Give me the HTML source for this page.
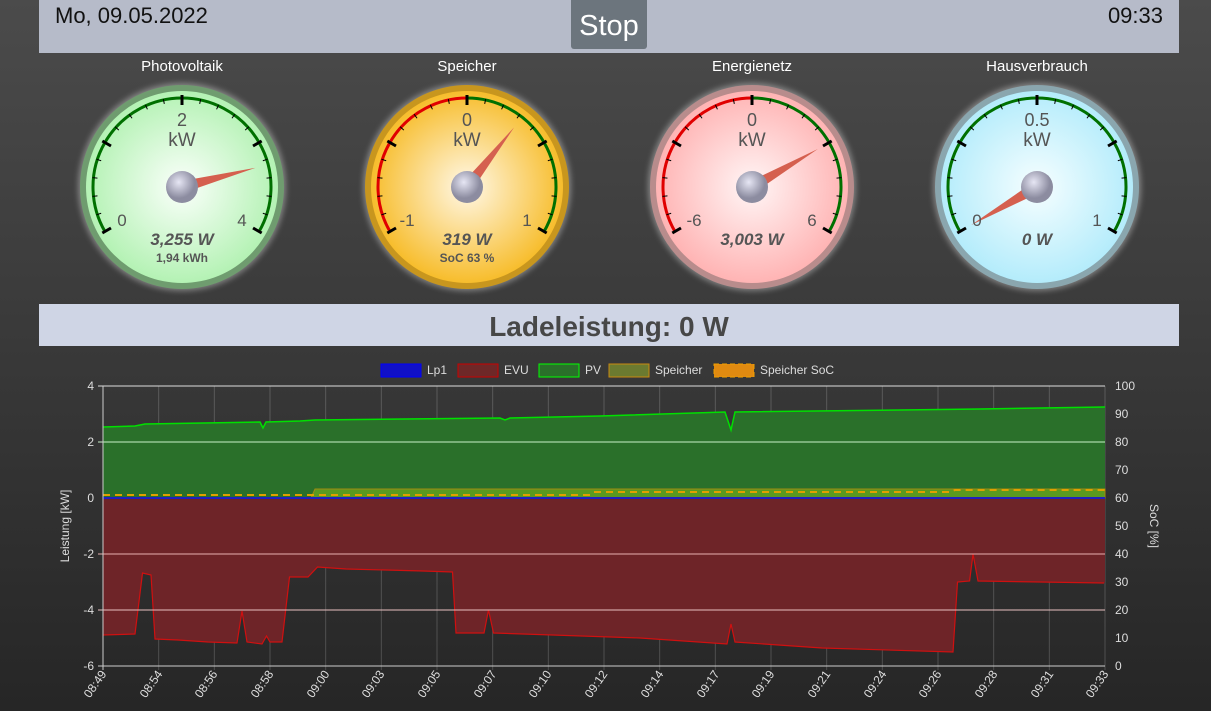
<!DOCTYPE html>
<html><head><meta charset="utf-8">
<style>
html,body{margin:0;padding:0;width:1211px;height:711px;overflow:hidden}
body{background:linear-gradient(#4b4b4b,#262626);font-family:"Liberation Sans",sans-serif;position:relative}
.hdr{position:absolute;left:39px;top:0;width:1140px;height:53px;background:#b6bbc9}
.hdr .d{position:absolute;left:16px;top:3px;font-size:22px;color:#111}
.hdr .t{position:absolute;right:16px;top:3px;font-size:22px;color:#111}
.stop{position:absolute;left:571px;top:0;width:76px;height:49px;background:#6c757d;border-radius:0 0 3px 3px;color:#fff;font-size:29px;text-align:center;line-height:52px}
.gt{position:absolute;top:58px;width:200px;text-align:center;color:#fff;font-size:15px}
svg.g{position:absolute;top:77px;width:220px;height:220px;overflow:visible}
.lade{position:absolute;left:39px;top:304px;width:1140px;height:42px;background:#cfd5e5;color:#474747;font-weight:bold;font-size:28px;text-align:center;line-height:46px}
svg.c{position:absolute;left:0;top:355px}
</style></head><body>
<div class="hdr"><div class="d">Mo, 09.05.2022</div><div class="t">09:33</div></div>
<div class="stop">Stop</div>
<div class="gt" style="left:82px">Photovoltaik</div>
<div class="gt" style="left:367px">Speicher</div>
<div class="gt" style="left:652px">Energienetz</div>
<div class="gt" style="left:937px">Hausverbrauch</div>

<svg class="g" id="g0" style="left:72px" viewBox="0 0 220 220">
<defs>
<radialGradient id="fg0"><stop offset="0" stop-color="#fbfffb"/><stop offset="1" stop-color="#b4f2b4"/></radialGradient>
<radialGradient id="fg1"><stop offset="0" stop-color="#fff8e8"/><stop offset="1" stop-color="#f7bd2c"/></radialGradient>
<radialGradient id="fg2"><stop offset="0" stop-color="#fff6f6"/><stop offset="1" stop-color="#ffb4b4"/></radialGradient>
<radialGradient id="fg3"><stop offset="0" stop-color="#f6feff"/><stop offset="1" stop-color="#b4ecfb"/></radialGradient>
<radialGradient id="hub" cx="0.4" cy="0.35"><stop offset="0" stop-color="#e6e6f4"/><stop offset="1" stop-color="#8c8ca0"/></radialGradient>
<filter id="glow" x="-20%" y="-20%" width="140%" height="140%"><feGaussianBlur stdDeviation="3"/></filter>
</defs>
<g class="body"></g>
<text x="110" y="49" text-anchor="middle" font-size="18" fill="#555">2</text>
<text x="110" y="69" text-anchor="middle" font-size="19" fill="#555">kW</text>
<text x="50" y="149" text-anchor="middle" font-size="17" fill="#555">0</text>
<text x="170" y="149" text-anchor="middle" font-size="17" fill="#555">4</text>
<text x="110" y="168" text-anchor="middle" font-size="17" font-weight="bold" font-style="italic" fill="#555">3,255 W</text>
<text x="110" y="185" text-anchor="middle" font-size="12" font-weight="bold" fill="#555">1,94 kWh</text>
</svg>
<svg class="g" id="g1" style="left:357px" viewBox="0 0 220 220">
<g class="body"></g>
<text x="110" y="49" text-anchor="middle" font-size="18" fill="#555">0</text>
<text x="110" y="69" text-anchor="middle" font-size="19" fill="#555">kW</text>
<text x="50" y="149" text-anchor="middle" font-size="17" fill="#555">-1</text>
<text x="170" y="149" text-anchor="middle" font-size="17" fill="#555">1</text>
<text x="110" y="168" text-anchor="middle" font-size="17" font-weight="bold" font-style="italic" fill="#555">319 W</text>
<text x="110" y="185" text-anchor="middle" font-size="12" font-weight="bold" fill="#555">SoC 63 %</text>
</svg>
<svg class="g" id="g2" style="left:642px" viewBox="0 0 220 220">
<g class="body"></g>
<text x="110" y="49" text-anchor="middle" font-size="18" fill="#555">0</text>
<text x="110" y="69" text-anchor="middle" font-size="19" fill="#555">kW</text>
<text x="52" y="149" text-anchor="middle" font-size="17" fill="#555">-6</text>
<text x="170" y="149" text-anchor="middle" font-size="17" fill="#555">6</text>
<text x="110" y="168" text-anchor="middle" font-size="17" font-weight="bold" font-style="italic" fill="#555">3,003 W</text>
</svg>
<svg class="g" id="g3" style="left:927px" viewBox="0 0 220 220">
<g class="body"></g>
<text x="110" y="49" text-anchor="middle" font-size="18" fill="#555">0.5</text>
<text x="110" y="69" text-anchor="middle" font-size="19" fill="#555">kW</text>
<text x="50" y="149" text-anchor="middle" font-size="17" fill="#555">0</text>
<text x="170" y="149" text-anchor="middle" font-size="17" fill="#555">1</text>
<text x="110" y="168" text-anchor="middle" font-size="17" font-weight="bold" font-style="italic" fill="#555">0 W</text>
</svg>

<div class="lade">Ladeleistung: 0 W</div>

<svg class="c" width="1211" height="356" viewBox="0 355 1211 356" font-family="Liberation Sans, sans-serif">
<rect x="381" y="364" width="40" height="13" fill="#1010c8" stroke="#0000ff"/><text x="427" y="374" font-size="12" fill="#ddd">Lp1</text>
<rect x="458" y="364" width="40" height="13" fill="#6e2828" stroke="#c00"/><text x="504" y="374" font-size="12" fill="#ddd">EVU</text>
<rect x="539" y="364" width="40" height="13" fill="#2a702a" stroke="#0f0"/><text x="585" y="374" font-size="12" fill="#ddd">PV</text>
<rect x="609" y="364" width="40" height="13" fill="#6b7a30" stroke="#c88a10"/><text x="655" y="374" font-size="12" fill="#ddd">Speicher</text>
<rect x="714" y="364" width="40" height="13" fill="#e08a10" stroke="#f0a000" stroke-dasharray="5 3"/><text x="760" y="374" font-size="12" fill="#ddd">Speicher SoC</text>
<g id="vgrid"></g>
<polygon fill="#2a702a" points="103,498 103,427 135,426 145,424 260,422 263,428 266,422 300,421 315,420 500,418 505,420 510,418 600,416 725,412 731,430 735,412 900,410 980,409 1105,407 1105,498"/>
<polyline fill="none" stroke="#00e000" stroke-width="1.5" points="103,427 135,426 145,424 260,422 263,428 266,422 300,421 315,420 500,418 505,420 510,418 600,416 725,412 731,430 735,412 900,410 980,409 1105,407"/>
<polygon fill="#6e2428" points="103,498 103,635 135,634 142.5,573 151,575 155,639 178,640 208,642 237,643 242,611 247,642 262,644 266.5,636 270,642 282,642 289.5,577 308,577 317.5,567 346,569 423,571 452.5,572 456,633 484,633 488.5,610 493.5,633 640,638 727,644 731,624 735,642 822,648 953,652 957.5,582 969.6,581 973,554 978,581 1104,583 1105,583 1105,498"/>
<polyline fill="none" stroke="#d01010" stroke-width="1.2" points="103,635 135,634 142.5,573 151,575 155,639 178,640 208,642 237,643 242,611 247,642 262,644 266.5,636 270,642 282,642 289.5,577 308,577 317.5,567 346,569 423,571 452.5,572 456,633 484,633 488.5,610 493.5,633 640,638 727,644 731,624 735,642 822,648 953,652 957.5,582 969.6,581 973,554 978,581 1104,583"/>
<polygon fill="#5a9a20" stroke="#a08a10" points="311,498 315,489 1105,489 1105,498"/>
<line x1="103" y1="498" x2="1105" y2="498" stroke="#2020c0" stroke-width="2"/>
<polyline fill="none" stroke="#e0a000" stroke-width="2" stroke-dasharray="7 5" points="103,495 590,495 594,492 950,492 955,490 1105,490"/>
<g stroke-width="1">
<line x1="98" y1="386" x2="1105" y2="386" stroke="#ddd"/>
<line x1="98" y1="442" x2="1105" y2="442" stroke="#c8f0c8"/>
<line x1="98" y1="554" x2="1105" y2="554" stroke="#e8b0b0"/>
<line x1="98" y1="610" x2="1105" y2="610" stroke="#e8c0c0"/>
<line x1="98" y1="666" x2="1105" y2="666" stroke="#ccc"/>
<line x1="103" y1="386" x2="103" y2="670" stroke="#ccc"/>
</g>
<g font-size="12" fill="#ddd" text-anchor="end">
<text x="94" y="390">4</text><text x="94" y="446">2</text><text x="94" y="502">0</text><text x="94" y="558">-2</text><text x="94" y="614">-4</text><text x="94" y="670">-6</text>
</g>
<g font-size="12" fill="#ddd">
<text x="1115" y="390">100</text><text x="1115" y="418">90</text><text x="1115" y="446">80</text><text x="1115" y="474">70</text><text x="1115" y="502">60</text><text x="1115" y="530">50</text><text x="1115" y="558">40</text><text x="1115" y="586">30</text><text x="1115" y="614">20</text><text x="1115" y="642">10</text><text x="1115" y="670">0</text>
</g>
<text transform="translate(69,526) rotate(-90)" text-anchor="middle" font-size="12" fill="#ddd">Leistung [kW]</text>
<text transform="translate(1150,526) rotate(90)" text-anchor="middle" font-size="12" fill="#ddd">SoC [%]</text>
<g id="xl" font-size="12" fill="#ddd" text-anchor="end">
<text transform="translate(107,674) rotate(-55)">08:49</text>
<text transform="translate(163,674) rotate(-55)">08:54</text>
<text transform="translate(218,674) rotate(-55)">08:56</text>
<text transform="translate(274,674) rotate(-55)">08:58</text>
<text transform="translate(330,674) rotate(-55)">09:00</text>
<text transform="translate(385,674) rotate(-55)">09:03</text>
<text transform="translate(441,674) rotate(-55)">09:05</text>
<text transform="translate(497,674) rotate(-55)">09:07</text>
<text transform="translate(552,674) rotate(-55)">09:10</text>
<text transform="translate(608,674) rotate(-55)">09:12</text>
<text transform="translate(664,674) rotate(-55)">09:14</text>
<text transform="translate(720,674) rotate(-55)">09:17</text>
<text transform="translate(775,674) rotate(-55)">09:19</text>
<text transform="translate(831,674) rotate(-55)">09:21</text>
<text transform="translate(887,674) rotate(-55)">09:24</text>
<text transform="translate(942,674) rotate(-55)">09:26</text>
<text transform="translate(998,674) rotate(-55)">09:28</text>
<text transform="translate(1054,674) rotate(-55)">09:31</text>
<text transform="translate(1109,674) rotate(-55)">09:33</text>
</g>
</svg>
<script>
var NS="http://www.w3.org/2000/svg";
function el(p,t,a){var e=document.createElementNS(NS,t);for(var k in a)e.setAttribute(k,a[k]);p.appendChild(e);return e;}
var vg=document.getElementById('vgrid');
for(var i=1;i<=18;i++){var x=103+i*1002/18;el(vg,'line',{x1:x,y1:386,x2:x,y2:670,stroke:'rgba(255,255,255,0.18)'});}
var R=120;
var G=[{rim:'#6f9c6f',face:'url(#fg0)',arcs:[[-R,R,'#007000']],v:-R+2*R*0.814},
{rim:'#c8961e',face:'url(#fg1)',arcs:[[-R,0,'#e00000'],[0,R,'#007000']],v:R*0.319},
{rim:'#b88c8c',face:'url(#fg2)',arcs:[[-R,0,'#e00000'],[0,R,'#007000']],v:R*0.5},
{rim:'#8aa6ae',face:'url(#fg3)',arcs:[[-R,R,'#007000']],v:-R}];
function P(a,r){a=a*Math.PI/180;return [110+r*Math.sin(a),110-r*Math.cos(a)];}
G.forEach(function(g,i){
 var s=document.getElementById('g'+i);var b=s.querySelector('.body');
 el(b,'circle',{cx:110,cy:110,r:104,fill:'#fff',opacity:0.35,filter:'url(#glow)'});
 el(b,'circle',{cx:110,cy:110,r:102,fill:g.rim});
 el(b,'circle',{cx:110,cy:110,r:96,fill:g.face});
 g.arcs.forEach(function(a){var p1=P(a[0],89),p2=P(a[1],89);var la=(a[1]-a[0])>180?1:0;
  el(b,'path',{d:'M'+p1+' A89 89 0 '+la+' 1 '+p2,fill:'none',stroke:a[2],'stroke-width':3});});
 for(var k=0;k<=20;k++){var a=-R+k*(2*R/20);var maj=k%5==0;
  var p1=P(a,maj?82:85),p2=P(a,maj?92:90);
  el(b,'line',{x1:p1[0],y1:p1[1],x2:p2[0],y2:p2[1],stroke:'#000','stroke-width':maj?3:1});}
 var t=P(g.v,76),l=P(g.v-90,6),r=P(g.v+90,6);
 el(b,'polygon',{points:t+' '+l+' '+r,fill:'#d5604f'});
 el(b,'circle',{cx:110,cy:110,r:16,fill:'url(#hub)'});
});
</script>
</body></html>
